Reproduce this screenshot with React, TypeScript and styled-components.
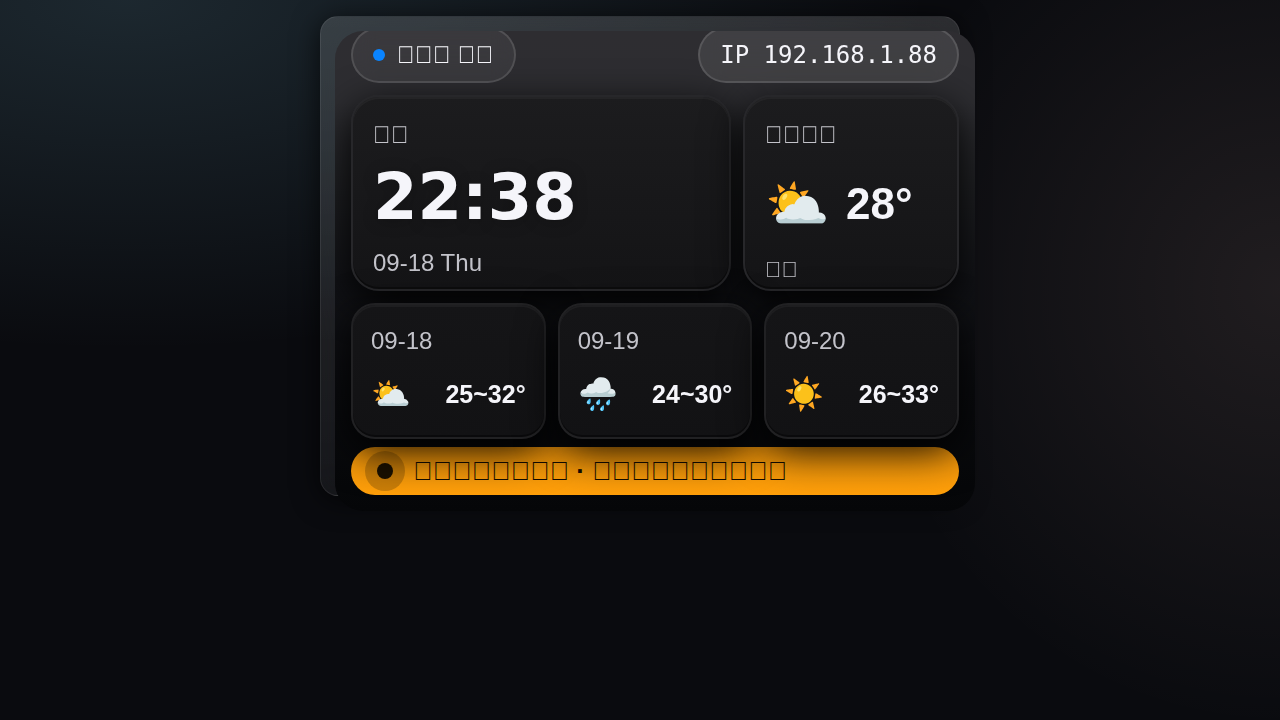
import React from "react";
import styled, { createGlobalStyle } from "styled-components";

const GlobalStyle = createGlobalStyle`
  *, *::before, *::after { box-sizing: border-box; }
  body {
    margin: 0;
    min-height: 100vh;
    padding: 16px;
    color: #f5f5fa;
    font-family: "Liberation Sans", Arial, sans-serif;
    background:
      radial-gradient(420px 440px at 100% 40%, rgba(255, 205, 195, 0.09), transparent 100%),
      radial-gradient(800px 350px at 10% 0%, rgba(125, 190, 215, 0.16), transparent 100%),
      #0a0b0f;
  }
`;

const Frame = styled.main`
  width: 100%;
  max-width: 640px;
  height: 480px;
  margin: 0 auto;
  padding: 14px;
  border: 1px solid rgba(255, 255, 255, 0.08);
  border-radius: 18px;
  background: linear-gradient(180deg, rgba(255, 255, 255, 0.14), rgba(255, 255, 255, 0.05));
  box-shadow: 0 4px 28px rgba(0, 0, 0, 0.7);
  backdrop-filter: blur(20px);
`;

const Screen = styled.div`
  width: calc(100% + 30px);
  height: 480px;
  padding: 16px;
  display: flex;
  flex-direction: column;
  justify-content: flex-end;
  overflow: hidden;
  border-radius: 28px;
  background: linear-gradient(180deg, #2e2d31 0%, #2d2d31 15%, #1d1e21 35%, #121317 52%, #0a0b0e 75%, #050608 100%);
`;

const StatusBar = styled.header`
  display: flex;
  flex: none;
  justify-content: space-between;
  margin-bottom: 12px;
`;

const Pill = styled.div<{ $mono?: boolean }>`
  position: relative;
  z-index: 2;
  display: flex;
  align-items: center;
  gap: 12px;
  height: 56px;
  padding: 0 20px;
  border: 2px solid rgba(255, 255, 255, 0.12);
  border-radius: 28px;
  background: rgba(255, 255, 255, ${(p) => (p.$mono ? 0.09 : 0.06)});
  backdrop-filter: blur(12px);
  font-family: ${(p) => (p.$mono ? '"DejaVu Sans Mono", monospace' : "inherit")};
  font-size: 24px;
  line-height: 28px;
  white-space: nowrap;
`;

const StatusDot = styled.span`
  width: 12px;
  height: 12px;
  border-radius: 50%;
  background: #0a84ff;
`;

const Card = styled.section<{ $small?: boolean }>`
  position: relative;
  z-index: 1;
  display: flex;
  flex-direction: column;
  min-width: 0;
  height: ${(p) => (p.$small ? 136 : 196)}px;
  padding: ${(p) => (p.$small ? "22px 18px 4px" : "24px 20px 0")};
  border: 2px solid ${(p) => (p.$small ? "#212123" : "#27272a")};
  border-radius: ${(p) => (p.$small ? 24 : 28)}px;
  background: ${(p) =>
    p.$small ? "linear-gradient(180deg, #151517, #121214)" : "linear-gradient(180deg, #1c1c1e, #141416)"};
  backdrop-filter: blur(12px);
  box-shadow:
    0 12px 40px rgba(0, 0, 0, 0.95),
    inset 0 2px 0 rgba(255, 255, 255, 0.04),
    inset 0 -2px 0 rgba(0, 0, 0, 0.4);
`;

const MainRow = styled.div`
  display: grid;
  flex: none;
  grid-template-columns: minmax(0, 380fr) minmax(0, 216fr);
  gap: 12px;
  margin-bottom: 12px;
`;

const ForecastRow = styled.div`
  display: grid;
  flex: none;
  grid-template-columns: repeat(3, minmax(0, 1fr));
  gap: 12px;
  margin-bottom: 8px;
`;

const Label = styled.div<{ $size?: number }>`
  color: #c3c3ca;
  font-size: ${(p) => p.$size ?? 24}px;
  line-height: ${(p) => (p.$size ? 22 : 28)}px;
  white-space: nowrap;
`;

const Clock = styled.time`
  margin: 12px 0 16px;
  font-family: "DejaVu Sans", sans-serif;
  font-size: 64px;
  font-weight: 700;
  line-height: 72px;
  text-shadow: 0 2px 16px rgba(0, 0, 0, 0.25);
`;

const Current = styled.div`
  display: flex;
  align-items: center;
  gap: 16px;
  height: 110px;
`;

const Emoji = styled.span<{ $size: number }>`
  font-size: ${(p) => p.$size}px;
  line-height: 60px;
`;

const Temperature = styled.strong<{ $size: number }>`
  font-size: ${(p) => p.$size}px;
  line-height: 48px;
  white-space: nowrap;
`;

const ForecastBody = styled.div`
  display: flex;
  flex: 1;
  align-items: center;
  justify-content: space-between;
`;

const Alert = styled.footer`
  display: flex;
  flex: none;
  align-items: center;
  gap: 8px;
  height: 48px;
  padding: 0 14px;
  border-radius: 24px;
  background: linear-gradient(180deg, #f0950a, #ff9f0a);
  backdrop-filter: blur(12px);
  color: #140c00;
  font-size: 26px;
  font-weight: 700;
  line-height: 30px;
  white-space: nowrap;
`;

const AlertIcon = styled.span`
  display: grid;
  place-items: center;
  width: 40px;
  height: 40px;
  border-radius: 50%;
  background: rgba(0, 0, 0, 0.2);

  &::before {
    content: "";
    width: 16px;
    height: 16px;
    border-radius: 50%;
    background: #1a1000;
  }
`;

/* A code point without a glyph: the font draws its placeholder box. */
const box = (count: number) => "\u{F0000}".repeat(count);

const forecast = [
  { date: "09-18", icon: "⛅", range: "25~32°" },
  { date: "09-19", icon: "🌧️", range: "24~30°" },
  { date: "09-20", icon: "☀️", range: "26~33°" },
];

export default function App() {
  return (
    <>
      <GlobalStyle />
      <Frame>
        <Screen>
          <StatusBar>
            <Pill>
              <StatusDot />
              <span>{box(3)} {box(2)}</span>
            </Pill>
            <Pill $mono>IP 192.168.1.88</Pill>
          </StatusBar>
          <MainRow>
            <Card>
              <Label>{box(2)}</Label>
              <Clock>22:38</Clock>
              <Label>09-18 Thu</Label>
            </Card>
            <Card>
              <Label>{box(4)}</Label>
              <Current>
                <Emoji $size={52}>⛅</Emoji>
                <Temperature $size={44}>28°</Temperature>
              </Current>
              <Label $size={22}>{box(2)}</Label>
            </Card>
          </MainRow>
          <ForecastRow>
            {forecast.map((day) => (
              <Card $small key={day.date}>
                <Label>{day.date}</Label>
                <ForecastBody>
                  <Emoji $size={32}>{day.icon}</Emoji>
                  <Temperature $size={25}>{day.range}</Temperature>
                </ForecastBody>
              </Card>
            ))}
          </ForecastRow>
          <Alert role="status">
            <AlertIcon />
            <span>{box(8)} · {box(10)}</span>
          </Alert>
        </Screen>
      </Frame>
    </>
  );
}
